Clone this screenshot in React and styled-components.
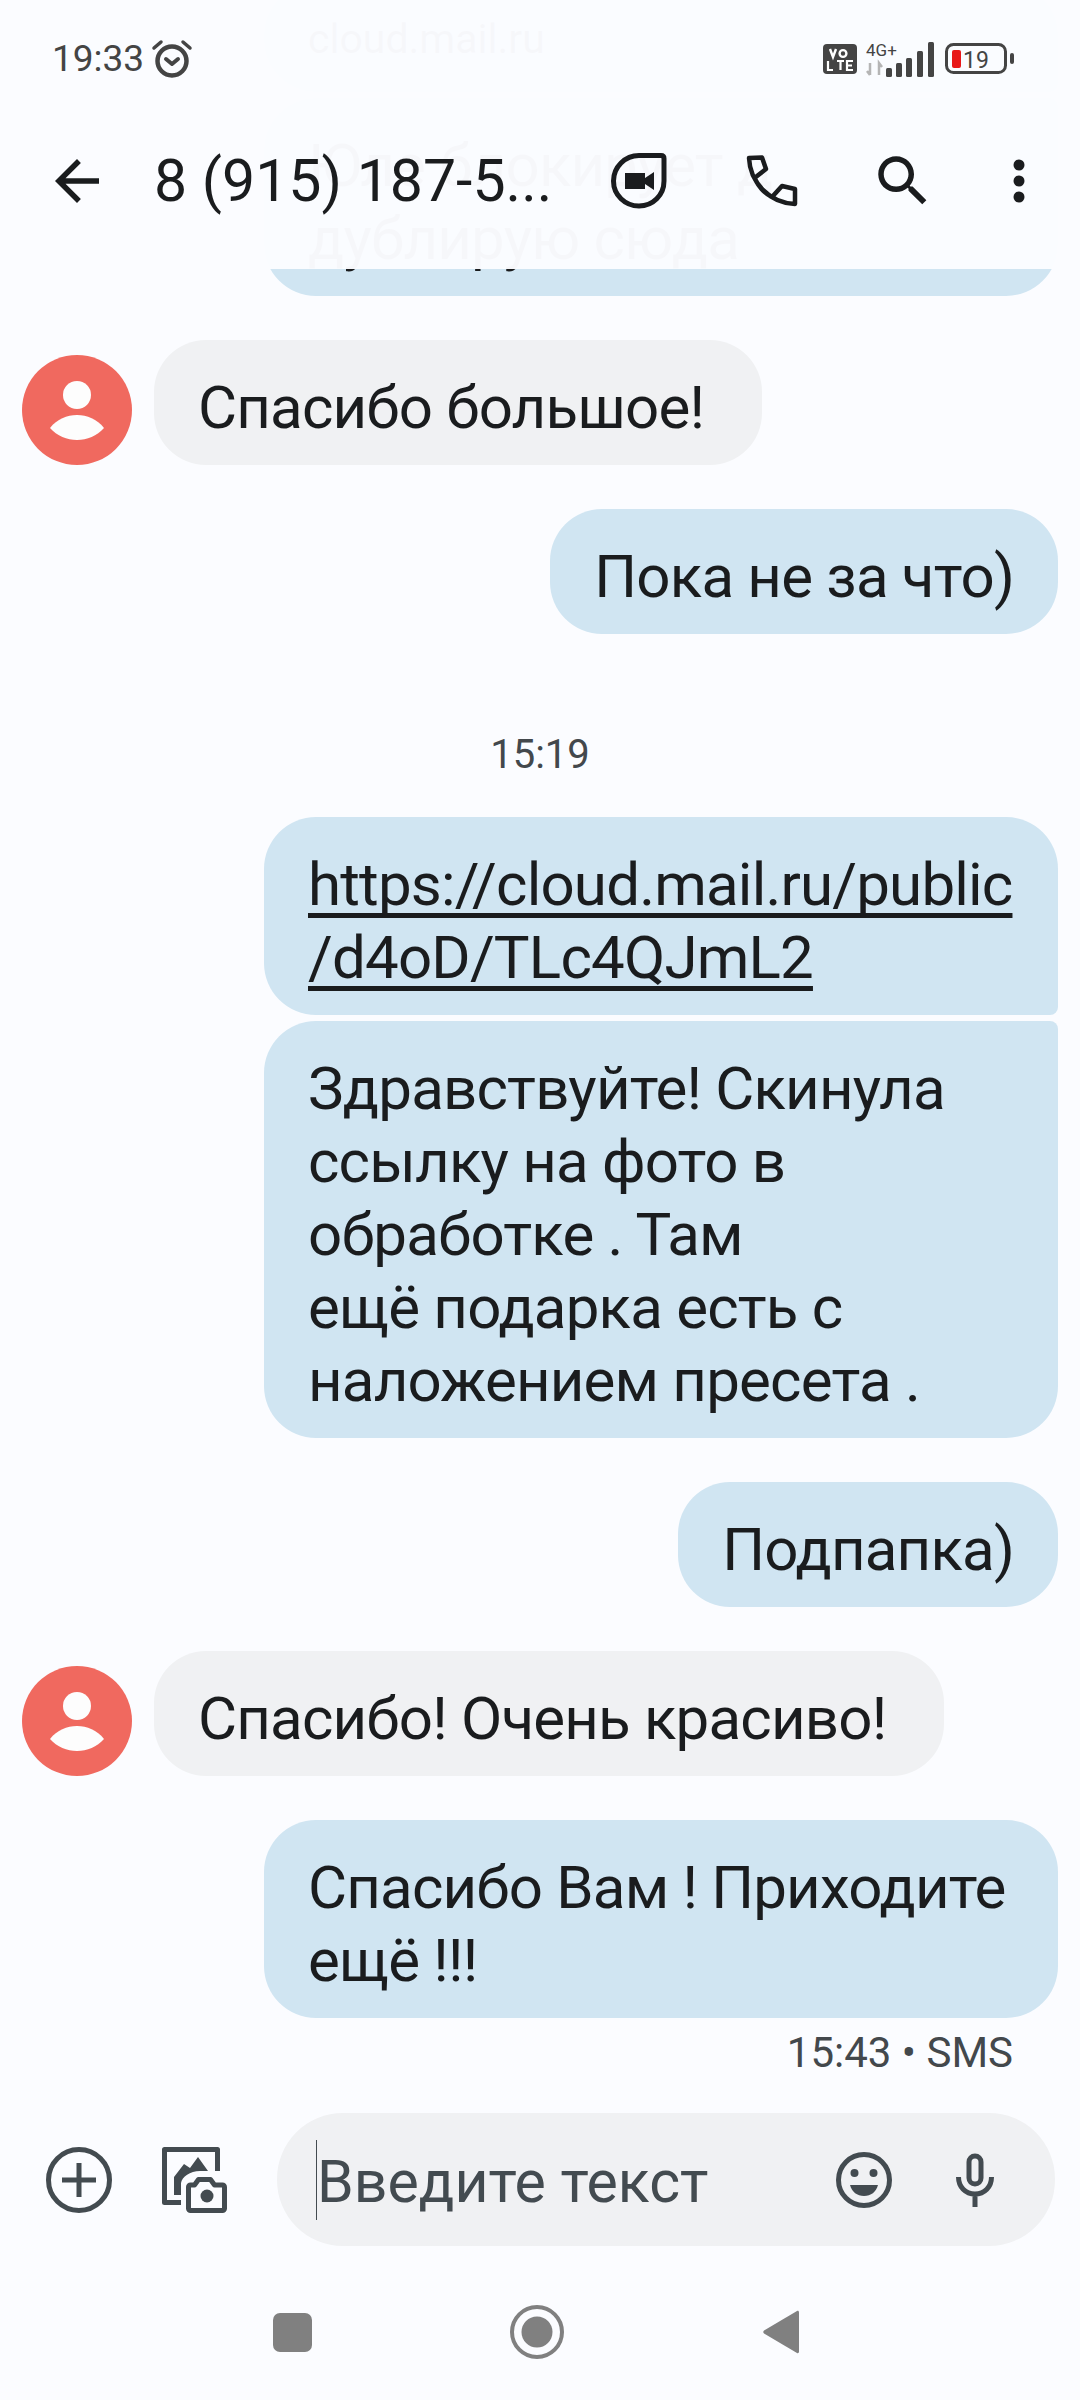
import React from "react";
import styled, { createGlobalStyle } from "styled-components";

const Global = createGlobalStyle`
  html, body { margin: 0; padding: 0; background: #fbfcff; }
  * { box-sizing: border-box; }
`;

const FONT = `Roboto, "Noto Sans", sans-serif`;

const Page = styled.div`
  position: relative;
  width: 1080px;
  height: 2400px;
  overflow: hidden;
  display: flex;
  flex-direction: column;
  background: #fbfcff;
  font-family: ${FONT};
  color: #1a1c1e;
`;

const TopBar = styled.header`
  position: absolute;
  top: 0;
  left: 0;
  right: 0;
  height: 269px;
  background: rgba(251, 252, 255, 0.982);
  display: flex;
  flex-direction: column;
`;

const StatusBar = styled.div`
  height: 114px;
  padding: 32px 65px 0 52px;
  display: flex;
  align-items: flex-start;
  justify-content: space-between;
  color: #444;
`;

const StatusLeft = styled.div`
  display: flex;
  align-items: center;
  gap: 7px;
`;

const Clock = styled.span`
  font: 37px/54px Roboto, sans-serif;
`;

const StatusRight = styled.div`
  display: flex;
  align-items: center;
  gap: 9px;
  padding-top: 9px;
`;

const Toolbar = styled.div`
  display: flex;
  align-items: center;
  height: 134px;
  padding-left: 44px;
`;

const Title = styled.h1`
  margin: 0 0 0 44px;
  width: 455px;
  font: 400 59px/70px ${FONT};
  white-space: nowrap;
`;

const IconSlot = styled.div`
  display: flex;
  align-items: center;
  flex-shrink: 0;
  margin-left: ${(p) => p.$left || 0}px;
`;

const Messages = styled.main`
  flex: 1;
  min-height: 0;
  overflow: hidden;
  display: flex;
  flex-direction: column;
  justify-content: flex-end;
  padding: 0 22px 35px;
`;

const Bubble = styled.div`
  flex-shrink: 0;
  padding: 31px ${(p) => (p.$in ? "58px" : "44px")} 21px 44px;
  font-size: 60px;
  line-height: 73px;
  letter-spacing: -0.8px;
  white-space: nowrap;
  width: ${(p) => (p.$wide ? "794px" : "auto")};
  border-radius: ${(p) => p.$radius || "52px"};
  background: ${(p) => (p.$in ? "#f0f1f3" : "#d0e5f2")};
`;

const Caption = styled.span`
  display: block;
  font-size: 41px;
  line-height: 50px;
  letter-spacing: 0;
  margin-bottom: 7px;
`;

const Group = styled.div`
  flex-shrink: 0;
  display: flex;
  flex-direction: column;
  align-items: flex-end;
  gap: 6px;
  margin-top: ${(p) => p.$top ?? 44}px;
`;

const Incoming = styled.div`
  flex-shrink: 0;
  display: flex;
  align-items: flex-end;
  gap: 22px;
  margin-top: 44px;
`;

const Link = styled.span`
  text-decoration: underline;
  text-decoration-thickness: 5px;
  text-underline-offset: 8px;
  text-decoration-skip-ink: none;
`;

const TimeLabel = styled.div`
  flex-shrink: 0;
  text-align: center;
  font-size: 40px;
  line-height: 50px;
  color: #43484c;
  margin: 96px 0 -7px;
`;

const Receipt = styled.div`
  flex-shrink: 0;
  text-align: right;
  font-size: 42px;
  line-height: 50px;
  color: #43484c;
  padding-right: 45px;
  margin-top: 10px;
`;

const Composer = styled.div`
  flex-shrink: 0;
  height: 133px;
  display: flex;
  align-items: center;
  padding: 0 25px 0 46px;
`;

const Input = styled.div`
  width: 778px;
  height: 133px;
  margin-left: 49px;
  border-radius: 66px;
  background: #f0f1f3;
  display: flex;
  align-items: center;
  padding: 0 61px 0 39px;
  color: #434b50;
`;

const Caret = styled.span`
  width: 1px;
  height: 80px;
  background: #434b50;
`;

const Placeholder = styled.span`
  font: 400 59px/80px ${FONT};
  padding-top: 4px;
  flex: 1;
`;

const NavBar = styled.nav`
  flex-shrink: 0;
  height: 154px;
  padding: 18px 0 0 273px;
  display: grid;
  grid-template-columns: 39px 54px 37px;
  justify-content: start;
  align-items: center;
  column-gap: 198px;
`;

const NavSquare = styled.span`
  width: 39px;
  height: 39px;
  border-radius: 7px;
  background: #808080;
`;

const Avatar = () => (
  <svg width="110" height="110" viewBox="0 0 110 110">
    <circle cx="55" cy="55" r="55" fill="#f0695f" />
    <circle cx="55" cy="40" r="14" fill="#fdfdfd" />
    <path d="M28 73c7-9 17-13 27-13s20 4 27 13c-7 8-17 12-27 12s-20-4-27-12z" fill="#fdfdfd" />
  </svg>
);

const AlarmIcon = () => (
  <svg width="42" height="40" viewBox="0 0 42 40" fill="none" stroke="#444">
    <circle cx="21" cy="22" r="14.500" strokeWidth="4.500" />
    <path d="M15 20l6 5 6-5" strokeWidth="4" strokeLinecap="round" strokeLinejoin="round" />
    <path d="M3 9l7-6M39 9l-7-6" strokeWidth="3.500" strokeLinecap="round" />
  </svg>
);

const VoLte = () => (
  <svg width="34" height="30" viewBox="0 0 34 30">
    <rect width="34" height="30" rx="4" fill="#444" />
    <path d="M7 5l3 8 3-8" fill="none" stroke="#fff" strokeWidth="2.400" />
    <circle cx="20" cy="9.500" r="3.400" fill="none" stroke="#fff" strokeWidth="2.400" />
    <path d="M5 17v9h5M14 17h7M17.500 17v9M30 17h-6v9h6M24 21.500h5" fill="none" stroke="#fff" strokeWidth="2.200" />
  </svg>
);

const Signal = () => (
  <svg width="70" height="36" viewBox="0 0 70 36">
    <text x="0" y="15" fontFamily="Roboto, sans-serif" fontSize="17" fill="#444">4G+</text>
    <path d="M4 22v12M1 30l3 4M13 34V22l3 4" fill="none" stroke="#b5b5b5" strokeWidth="2.500" />
    <rect x="20" y="27" width="6" height="9" rx="1.500" fill="#444" />
    <rect x="30" y="22" width="6" height="14" rx="1.500" fill="#444" />
    <rect x="40" y="17" width="6" height="19" rx="1.500" fill="#444" />
    <rect x="51" y="10" width="6" height="26" rx="1.500" fill="#444" />
    <rect x="62" y="1" width="6" height="35" rx="1.500" fill="#444" />
  </svg>
);

const Battery = () => (
  <svg width="70" height="32" viewBox="0 0 70 32">
    <rect x="1.500" y="1.500" width="59" height="28" rx="7" fill="none" stroke="#444" strokeWidth="3" />
    <rect x="7" y="7" width="9" height="18" rx="2" fill="#e81818" />
    <text x="18" y="25" fontFamily="Roboto, sans-serif" fontSize="23" fill="#444">19</text>
    <rect x="65" y="10" width="4" height="11" rx="2" fill="#444" />
  </svg>
);

const BackIcon = () => (
  <svg width="66" height="66" viewBox="0 0 24 24" fill="#1a1c1e">
    <path d="M20 11H7.830l5.590-5.590L12 4l-8 8 8 8 1.410-1.410L7.830 13H20v-2z" />
  </svg>
);

const MeetIcon = () => (
  <svg width="60" height="60" viewBox="0 0 60 60">
    <path d="M30 4.500h22c2 0 3 1 3 3V30c0 14-11 25-25 25S4.500 44 4.500 30 16 4.500 30 4.500z" fill="none" stroke="#1a1c1e" strokeWidth="5" />
    <path d="M16 22h20v5l9-6v18l-9-6v5H16z" fill="#1a1c1e" />
  </svg>
);

const PhoneIcon = () => (
  <svg width="54" height="54" viewBox="0 0 54 54" fill="none" stroke="#1a1c1e" strokeWidth="4.500" strokeLinejoin="round" strokeLinecap="round">
    <path d="M4 4C5 28 24 49 50 50V35L37 32 27 43C18 38 14 33 9.500 24L21 15 17 3.500z" />
  </svg>
);

const SearchIcon = () => (
  <svg width="66" height="66" viewBox="0 0 24 24" fill="#1a1c1e">
    <path d="M15.500 14h-.79l-.28-.27C15.410 12.590 16 11.110 16 9.500 16 5.910 13.090 3 9.500 3S3 5.910 3 9.500 5.910 16 9.500 16c1.610 0 3.090-.59 4.230-1.570l.27.28v.79l5 4.990L20.490 19l-4.990-5zm-6 0C7.010 14 5 11.990 5 9.500S7.010 5 9.500 5 14 7.010 14 9.500 11.990 14 9.500 14z" />
  </svg>
);

const DotsIcon = () => (
  <svg width="12" height="44" viewBox="0 0 12 44" fill="#1a1c1e">
    <circle cx="6" cy="6" r="5.500" />
    <circle cx="6" cy="22" r="5.500" />
    <circle cx="6" cy="38" r="5.500" />
  </svg>
);

const PlusIcon = () => (
  <svg width="66" height="66" viewBox="0 0 66 66" fill="none" stroke="#434b50" strokeWidth="5">
    <circle cx="33" cy="33" r="30.500" />
    <path d="M33 16v34M16 33h34" />
  </svg>
);

const GalleryIcon = () => (
  <svg width="66" height="66" viewBox="0 0 66 66">
    <path d="M19 55.500H2.500V2.500H55.500V24" fill="none" stroke="#434b50" strokeWidth="5" strokeLinejoin="round" />
    <path d="M12 48V30L22 17l6 4 8-11 10 14h-8c-10 0-18 6-19 12v12z" fill="#434b50" />
    <path d="M26.500 40a2 2 0 0 1 2-2h4l4-5.500h12l4 5.500h8a2 2 0 0 1 2 2v21.500a2 2 0 0 1-2 2h-32a2 2 0 0 1-2-2z" fill="#fbfcff" stroke="#434b50" strokeWidth="5" strokeLinejoin="round" />
    <circle cx="45" cy="49" r="6.500" fill="#434b50" />
  </svg>
);

const EmojiIcon = () => (
  <svg width="56" height="56" viewBox="0 0 56 56">
    <circle cx="28" cy="28" r="25.500" fill="none" stroke="#434b50" strokeWidth="5" />
    <circle cx="18.500" cy="21" r="4" fill="#434b50" />
    <circle cx="37.500" cy="21" r="4" fill="#434b50" />
    <path d="M14 33h28c-2 7-7 11-14 11s-12-4-14-11z" fill="#434b50" />
  </svg>
);

const MicIcon = () => (
  <svg width="38" height="54" viewBox="0 0 38 54" fill="none" stroke="#434b50">
    <rect x="13" y="3" width="12" height="28" rx="6" strokeWidth="5" />
    <path d="M2.500 24c0 10 7 17 16.500 17s16.500-7 16.500-17M19 41v13" strokeWidth="5" />
  </svg>
);

const NavCircle = () => (
  <svg width="54" height="54" viewBox="0 0 54 54">
    <circle cx="27" cy="27" r="25" fill="none" stroke="#808080" strokeWidth="4" />
    <circle cx="27" cy="27" r="15.500" fill="#808080" />
  </svg>
);

const NavBack = () => (
  <svg width="37" height="46" viewBox="0 0 37 46">
    <path d="M35 2L2 21.500a2 2 0 0 0 0 3L35 44c1 .5 2 0 2-1.500V3.500C37 2 36 1.500 35 2z" fill="#808080" />
  </svg>
);

export default function App() {
  return (
    <Page>
      <Global />
      <Messages>
        <Group $top={0}>
          <Bubble $wide $radius="52px 52px 8px 52px"><Caption>cloud.mail.ru</Caption></Bubble>
          <Bubble $wide $radius="52px 8px 52px 52px">Юле блокирует д<br />дублирую сюда</Bubble>
        </Group>
        <Incoming>
          <Avatar />
          <Bubble $in>Спасибо большое!</Bubble>
        </Incoming>
        <Group>
          <Bubble>Пока не за что)</Bubble>
        </Group>
        <TimeLabel>15:19</TimeLabel>
        <Group>
          <Bubble $wide $radius="52px 52px 8px 52px">
            <Link>https://cloud.mail.ru/public</Link><br /><Link>/d4oD/TLc4QJmL2</Link>
          </Bubble>
          <Bubble $wide $radius="52px 8px 52px 52px">
            Здравствуйте! Скинула<br />ссылку на фото в<br />обработке . Там<br />ещё подарка есть с<br />наложением пресета .
          </Bubble>
        </Group>
        <Group>
          <Bubble>Подпапка)</Bubble>
        </Group>
        <Incoming>
          <Avatar />
          <Bubble $in>Спасибо! Очень красиво!</Bubble>
        </Incoming>
        <Group>
          <Bubble $wide>Спасибо Вам ! Приходите<br />ещё !!!</Bubble>
        </Group>
        <Receipt>15:43 • SMS</Receipt>
      </Messages>
      <Composer>
        <PlusIcon />
        <IconSlot $left={50}><GalleryIcon /></IconSlot>
        <Input>
          <Caret />
          <Placeholder>Введите текст</Placeholder>
          <EmojiIcon />
          <IconSlot $left={64}><MicIcon /></IconSlot>
        </Input>
      </Composer>
      <NavBar>
        <NavSquare />
        <NavCircle />
        <NavBack />
      </NavBar>
      <TopBar>
        <StatusBar>
          <StatusLeft>
            <Clock>19:33</Clock>
            <AlarmIcon />
          </StatusLeft>
          <StatusRight>
            <VoLte />
            <Signal />
            <Battery />
          </StatusRight>
        </StatusBar>
        <Toolbar>
          <BackIcon />
          <Title>8 (915) 187-5...</Title>
          <IconSlot><MeetIcon /></IconSlot>
          <IconSlot $left={76}><PhoneIcon /></IconSlot>
          <IconSlot $left={71}><SearchIcon /></IconSlot>
          <IconSlot $left={77}><DotsIcon /></IconSlot>
        </Toolbar>
      </TopBar>
    </Page>
  );
}
